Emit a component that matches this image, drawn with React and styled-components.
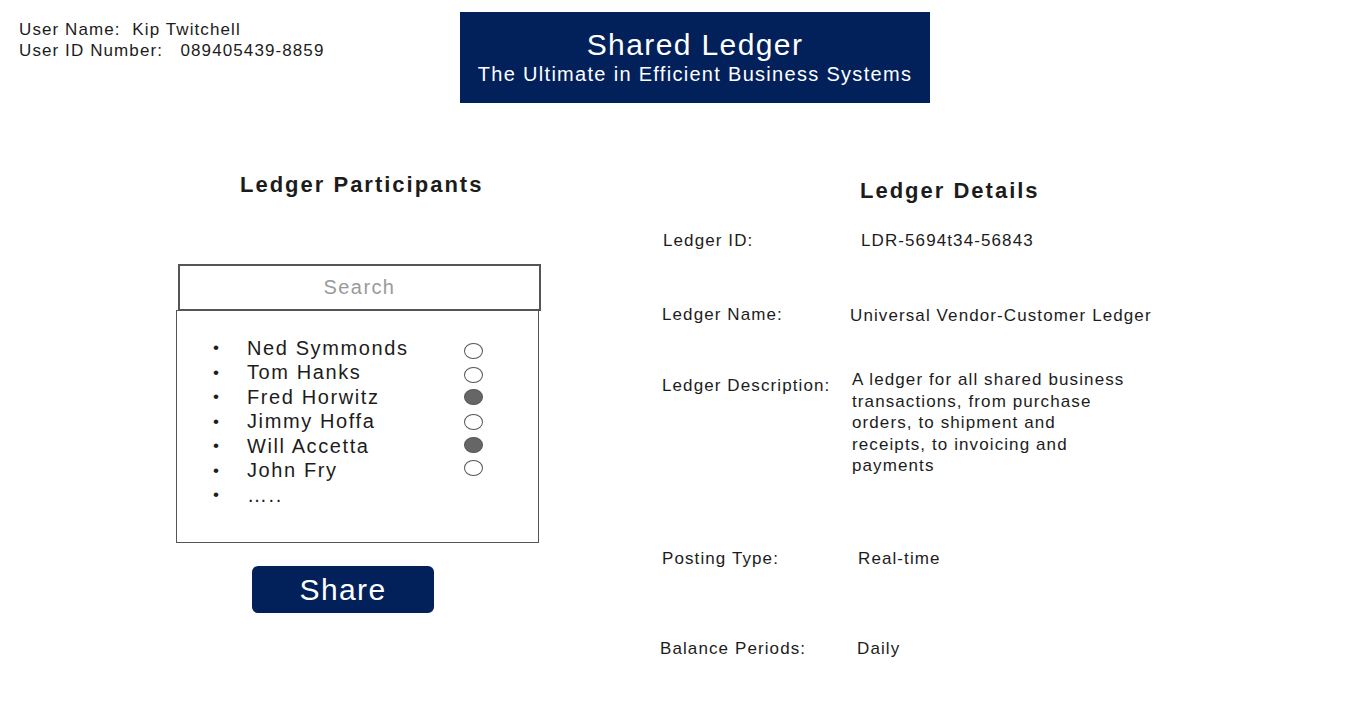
import React from "react";
import styled, { createGlobalStyle } from "styled-components";

const GlobalStyle = createGlobalStyle`
  html, body {
    margin: 0;
    padding: 0;
    background: #ffffff;
  }
  body {
    font-family: "Liberation Sans", Arial, sans-serif;
    color: #1c1c1c;
  }
`;

const NAVY = "#02215b";

const Page = styled.div`
  width: 1356px;
  height: 720px;
  overflow: hidden;
`;

const Header = styled.header`
  display: flex;
  align-items: flex-start;
`;

const UserInfo = styled.div`
  width: 460px;
  box-sizing: border-box;
  padding: 19px 0 0 19px;
  font-size: 17px;
  line-height: 21px;
  letter-spacing: 1.1px;
  white-space: pre;
`;

const Banner = styled.div`
  margin-top: 12px;
  width: 470px;
  height: 91px;
  box-sizing: border-box;
  padding-top: 16px;
  background: ${NAVY};
  color: #ffffff;
  text-align: center;
`;

const BannerTitle = styled.div`
  font-size: 30px;
  line-height: 34px;
  letter-spacing: 1.4px;
`;

const BannerSub = styled.div`
  font-size: 20px;
  line-height: 24px;
  letter-spacing: 1.3px;
`;

const Main = styled.main`
  display: grid;
  grid-template-columns: 660px 1fr;
`;

const Column = styled.section`
  display: flex;
  flex-direction: column;
  align-items: flex-start;
`;

const SectionTitle = styled.h2`
  margin: ${(p) => p.$top}px 0 0 ${(p) => p.$left}px;
  font-size: 22px;
  line-height: 26px;
  font-weight: bold;
  letter-spacing: 2px;
`;

const SearchBox = styled.div`
  margin: 66px 0 0 178px;
  width: 363px;
  height: 47px;
  box-sizing: border-box;
  border: 2px solid #555555;
  display: flex;
  align-items: center;
  justify-content: center;
  font-size: 20px;
  letter-spacing: 1.4px;
  color: #9a9a9a;
`;

const ListBox = styled.ul`
  list-style: none;
  margin: -1px 0 0 176px;
  width: 363px;
  height: 233px;
  box-sizing: border-box;
  padding: 25px 0 0 36px;
  border: 1.5px solid #555555;
`;

const Row = styled.li`
  display: grid;
  grid-template-columns: 34px 217px 20px;
  align-items: center;
  height: 24.5px;
  font-size: 20px;
  letter-spacing: 1.6px;
`;

const Bullet = styled.span`
  font-size: 17px;
`;

const Radio = styled.span`
  width: 19px;
  height: 16px;
  border-radius: 50%;
  box-sizing: border-box;
  border: 1.5px solid #555555;
  background: ${(p) => (p.$on ? "#666666" : "#ffffff")};
  transform: translateY(${(p) => p.$dy || 0}px);
`;

const ShareButton = styled.button`
  margin: 23px 0 0 252px;
  width: 182px;
  height: 47px;
  border: none;
  border-radius: 6px;
  background: ${NAVY};
  color: #ffffff;
  font-family: inherit;
  font-size: 30px;
  letter-spacing: 1.4px;
  padding: 0;
`;

const DetailRow = styled.div`
  margin: ${(p) => p.$top}px 0 0 ${(p) => p.$left ?? 2}px;
  display: grid;
  grid-template-columns: ${(p) => p.$label}px auto;
  font-size: 17px;
  line-height: 21.5px;
  letter-spacing: 1.1px;
`;

const Label = styled.div`
  padding-top: ${(p) => p.$pad || 0}px;
`;

const Value = styled.div`
  transform: translateY(${(p) => p.$dy || 0}px);
`;

const participants = [
  { name: "Ned Symmonds", on: false, dy: 3 },
  { name: "Tom Hanks", on: false, dy: 2 },
  { name: "Fred Horwitz", on: true, dy: 0 },
  { name: "Jimmy Hoffa", on: false, dy: 0 },
  { name: "Will Accetta", on: true, dy: -1 },
  { name: "John Fry", on: false, dy: -3 },
];

const description = [
  "A ledger for all shared business",
  "transactions, from purchase",
  "orders, to shipment and",
  "receipts, to invoicing and",
  "payments",
];

function App() {
  return (
    <Page>
      <GlobalStyle />
      <Header>
        <UserInfo>
          {"User Name:  Kip Twitchell\nUser ID Number:   089405439-8859"}
        </UserInfo>
        <Banner>
          <BannerTitle>Shared Ledger</BannerTitle>
          <BannerSub>The Ultimate in Efficient Business Systems</BannerSub>
        </Banner>
      </Header>
      <Main>
        <Column>
          <SectionTitle $top={69} $left={240}>
            Ledger Participants
          </SectionTitle>
          <SearchBox>Search</SearchBox>
          <ListBox>
            {participants.map((p) => (
              <Row key={p.name}>
                <Bullet>•</Bullet>
                <span>{p.name}</span>
                <Radio $on={p.on} $dy={p.dy} />
              </Row>
            ))}
            <Row>
              <Bullet>•</Bullet>
              <span>…..</span>
            </Row>
          </ListBox>
          <ShareButton>Share</ShareButton>
        </Column>
        <Column>
          <SectionTitle $top={75} $left={200}>
            Ledger Details
          </SectionTitle>
          <DetailRow $top={26} $label={198} $left={3}>
            <Label>Ledger ID:</Label>
            <Value>LDR-5694t34-56843</Value>
          </DetailRow>
          <DetailRow $top={52} $label={188}>
            <Label>Ledger Name:</Label>
            <Value $dy={1}>Universal Vendor-Customer Ledger</Value>
          </DetailRow>
          <DetailRow $top={44} $label={190}>
            <Label $pad={6}>Ledger Description:</Label>
            <Value>
              {description.map((line) => (
                <div key={line}>{line}</div>
              ))}
            </Value>
          </DetailRow>
          <DetailRow $top={71} $label={196}>
            <Label>Posting Type:</Label>
            <Value>Real-time</Value>
          </DetailRow>
          <DetailRow $top={69} $left={0} $label={197}>
            <Label>Balance Periods:</Label>
            <Value>Daily</Value>
          </DetailRow>
        </Column>
      </Main>
    </Page>
  );
}

export default App;
